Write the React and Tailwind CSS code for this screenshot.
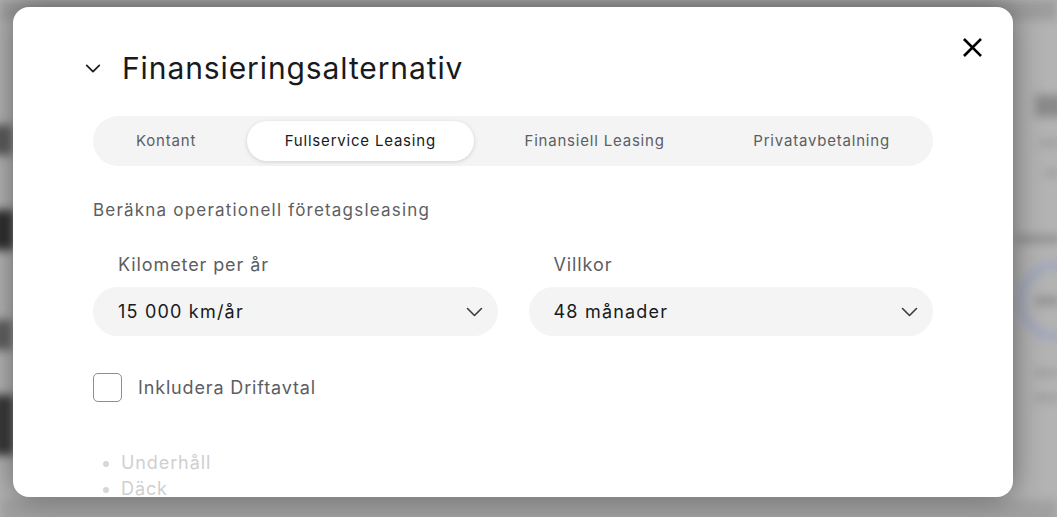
import React from "react";

const font = { fontFamily: "Inter, 'Noto Sans', sans-serif" };

function Chevron({ className, width = 1.6 }) {
  return (
    <svg viewBox="0 0 16 10" className={className} fill="none" stroke="currentColor" strokeWidth={width} strokeLinecap="round" strokeLinejoin="round">
      <path d="M1 1.5 L8 8.5 L15 1.5" />
    </svg>
  );
}

function Select({ label, value }) {
  return (
    <div className="flex flex-col gap-[10px]">
      <div className="pl-[25px] text-[18px] leading-[24px] tracking-[0.9px] text-[#5c5e62]">{label}</div>
      <div className="flex h-[49px] items-center justify-between rounded-full bg-[#f4f4f4] pl-[25px] pr-[15px]">
        <span className="text-[18px] tracking-[1.2px] text-[#171a20]">{value}</span>
        <Chevron className="h-[10px] w-[17px] text-[#393c41]" />
      </div>
    </div>
  );
}

export default function App() {
  const tabs = ["Kontant", "Fullservice Leasing", "Finansiell Leasing", "Privatavbetalning"];
  return (
    <div className="relative h-[517px] w-[1057px] overflow-hidden bg-[#b3b3b3]" style={font}>
      {/* blurred page behind the dialog */}
      <div className="absolute inset-0 blur-[5px]">
        <div className="absolute left-0 top-0 h-[20px] w-full bg-[#9c9c9c]" />
        <div className="absolute left-[-10px] top-[125px] h-[30px] w-[22px] bg-[#5a5a5a]" />
        <div className="absolute left-[-10px] top-[210px] h-[40px] w-[24px] bg-[#303030]" />
        <div className="absolute left-[-10px] top-[320px] h-[30px] w-[22px] bg-[#606060]" />
        <div className="absolute left-[-10px] top-[395px] h-[60px] w-[24px] bg-[#3a3a3a]" />
        <div className="absolute left-[1035px] top-[95px] h-[22px] w-[30px] bg-[#8a8a8a]" />
        <div className="absolute left-[1040px] top-[140px] h-[6px] w-[20px] bg-[#9a9a9a]" />
        <div className="absolute left-[1045px] top-[170px] h-[6px] w-[14px] bg-[#9a9a9a]" />
        <div className="absolute left-[1016px] top-[235px] h-[8px] w-[44px] bg-[#8f8f8f]" />
        <div className="absolute left-[1018px] top-[262px] h-[78px] w-[78px] rounded-full border-[6px] border-[#9aa3bf]" />
        <div className="absolute left-[1035px] top-[297px] h-[8px] w-[24px] bg-[#8f8f8f]" />
        <div className="absolute left-[1035px] top-[370px] h-[6px] w-[24px] bg-[#9a9a9a]" />
        <div className="absolute left-[1035px] top-[395px] h-[6px] w-[24px] bg-[#9a9a9a]" />
        <div className="absolute left-0 top-[500px] h-[30px] w-full bg-[#a0a0a0]" />
      </div>

      {/* dialog */}
      <div className="absolute left-[13px] top-[7px] h-[490px] w-[1000px] overflow-hidden rounded-[16px] bg-white shadow-[0_0_30px_rgba(0,0,0,0.45)]">
        <button className="absolute left-[950px] top-[31px] h-[19px] w-[19px] text-black">
          <svg viewBox="0 0 20 20" className="h-[19px] w-[19px]" fill="none" stroke="currentColor" strokeWidth="2.8" strokeLinecap="square">
            <path d="M2 2 L18 18 M18 2 L2 18" />
          </svg>
        </button>

        <div className="flex items-center pl-[72px] pt-[43px]">
          <Chevron className="h-[9px] w-[16px] text-[#171a20]" width={1.9} />
          <h2 className="ml-[21px] text-[30px] leading-[36px] tracking-[0.9px] text-[#171a20]">Finansieringsalternativ</h2>
        </div>

        <div className="flex flex-col px-[80px]">
          <div className="mt-[30px] flex h-[50px] items-center justify-between rounded-full bg-[#f4f4f4] px-[5px]">
            {tabs.map((t, i) => (
              <div
                key={t}
                className={
                  i === 1
                    ? "flex h-[40px] shrink-0 items-center whitespace-nowrap rounded-full bg-white px-[38px] text-[15px] tracking-[0.8px] text-[#171a20] shadow-[0_1px_4px_rgba(0,0,0,0.15)]"
                    : "flex h-[40px] shrink-0 items-center whitespace-nowrap rounded-full px-[38px] text-[15px] tracking-[0.8px] text-[#5c5e62]"
                }
              >
                {t}
              </div>
            ))}
          </div>

          <p className="mt-[32px] text-[17px] leading-[24px] tracking-[1.2px] text-[#5c5e62]">Beräkna operationell företagsleasing</p>

          <div className="mt-[31px] grid grid-cols-2 gap-[31px]">
            <Select label="Kilometer per år" value="15 000 km/år" />
            <Select label="Villkor" value="48 månader" />
          </div>

          <label className="mt-[37px] flex items-center gap-[16px]">
            <span className="h-[29px] w-[29px] rounded-[5px] border border-[#8e8e8e] bg-white" />
            <span className="text-[18px] tracking-[0.85px] text-[#5c5e62]">Inkludera Driftavtal</span>
          </label>

          <ul className="mt-[48px] list-disc pl-[28px] text-[18px] leading-[26px] tracking-[0.9px] text-[#cfcfcf] marker:text-[#d6d6d6]">
            <li>Underhåll</li>
            <li>Däck</li>
          </ul>
        </div>
      </div>
    </div>
  );
}
